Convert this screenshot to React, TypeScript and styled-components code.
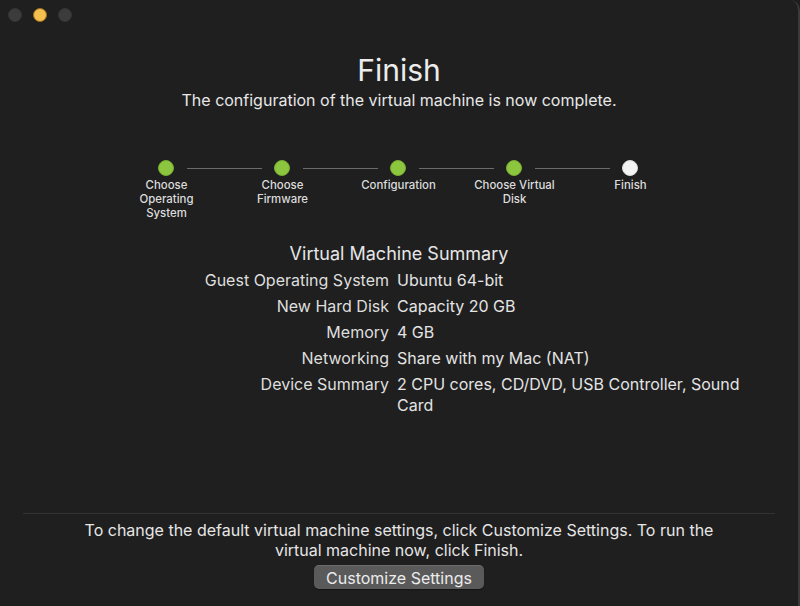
import styled, { createGlobalStyle } from 'styled-components'

const GlobalStyle = createGlobalStyle`
  html, body {
    margin: 0;
    padding: 0;
    background: #1e1e1e;
  }

  body {
    font-family: Inter, "Liberation Sans", sans-serif;
    color: #e4e4e4;
    -webkit-font-smoothing: antialiased;
  }
`

const steps = [
  { label: 'Choose Operating System', done: true },
  { label: 'Choose Firmware', done: true },
  { label: 'Configuration', done: true },
  { label: 'Choose Virtual Disk', done: true },
  { label: 'Finish', done: false },
]

const summary = [
  { name: 'Guest Operating System', value: 'Ubuntu 64-bit' },
  { name: 'New Hard Disk', value: 'Capacity 20 GB' },
  { name: 'Memory', value: '4 GB' },
  { name: 'Networking', value: 'Share with my Mac (NAT)' },
  { name: 'Device Summary', value: '2 CPU cores, CD/DVD, USB Controller, Sound Card' },
]

const App = () => {
  return (
    <>
      <GlobalStyle />
      <Window>
        <TitleBar>
          <Light />
          <Light $color='#f5bf4f' $ring='#9a6f1c' />
          <Light />
        </TitleBar>

        <Header>
          <Title>Finish</Title>
          <Subtitle>The configuration of the virtual machine is now complete.</Subtitle>
        </Header>

        <Stepper>
          {steps.map((step, i) => (
            <Step key={step.label}>
              <Track>
                <Connector $side='left' $hidden={i === 0} />
                <Dot $done={step.done} />
                <Connector $side='right' $hidden={i === steps.length - 1} />
              </Track>
              <StepLabel>{step.label}</StepLabel>
            </Step>
          ))}
        </Stepper>

        <SummaryTitle>Virtual Machine Summary</SummaryTitle>
        <SummaryGrid>
          {summary.map(row => (
            <Row key={row.name}>
              <RowName>{row.name}</RowName>
              <RowValue>{row.value}</RowValue>
            </Row>
          ))}
        </SummaryGrid>

        <Footer>
          <Hint>
            To change the default virtual machine settings, click Customize Settings. To run the
            virtual machine now, click Finish.
          </Hint>
          <Button type='button'>Customize Settings</Button>
        </Footer>
      </Window>
    </>
  )
}

const Window = styled.div`
  display: flex;
  flex-direction: column;
  width: 800px;
  height: 606px;
  box-sizing: border-box;
  background: #1f1f1f;
  border-right: 2px solid #3a3a3a;
  border-top-right-radius: 10px;
  overflow: hidden;
`

const TitleBar = styled.div`
  display: flex;
  align-items: center;
  gap: 11px;
  height: 30px;
  padding-left: 8px;
`

const Light = styled.span<{ $color?: string; $ring?: string }>`
  width: 14px;
  height: 14px;
  box-sizing: border-box;
  border-radius: 50%;
  background: ${p => p.$color || '#3c3c3c'};
  border: 1px solid ${p => p.$ring || '#353535'};
`

const Header = styled.div`
  display: flex;
  flex-direction: column;
  align-items: center;
  margin-top: 22px;
`

const Title = styled.h1`
  margin: 0;
  font-size: 30px;
  line-height: 36px;
  font-weight: 400;
  color: #ececec;
`

const Subtitle = styled.p`
  margin: 2px 0 0;
  font-size: 16px;
  line-height: 20px;
  color: #e8e8e8;
`

const Stepper = styled.div`
  display: grid;
  grid-template-columns: repeat(5, 116px);
  justify-content: center;
  margin: 50px 0 0 -1px;
`

const Step = styled.div`
  display: flex;
  flex-direction: column;
  align-items: center;
`

const Track = styled.div`
  display: flex;
  align-items: center;
  width: 100%;
`

const Connector = styled.span<{ $side: 'left' | 'right'; $hidden: boolean }>`
  flex: 1;
  height: 1px;
  background: ${p => (p.$hidden ? 'transparent' : '#6b6b6b')};
  margin-left: ${p => (p.$side === 'right' ? '13px' : '0')};
  margin-right: ${p => (p.$side === 'left' ? '12px' : '0')};
`

const Dot = styled.span<{ $done: boolean }>`
  width: 16px;
  height: 16px;
  box-sizing: border-box;
  border-radius: 50%;
  background: ${p => (p.$done ? '#8cc63f' : '#f4f4f4')};
  border: 1px solid ${p => (p.$done ? '#79ad33' : '#dcdcdc')};
`

const StepLabel = styled.span`
  margin-top: 2px;
  max-width: 94px;
  font-size: 11.4px;
  line-height: 14px;
  font-weight: 500;
  text-align: center;
  color: #dcdcdc;
`

const SummaryTitle = styled.h2`
  margin: 23px 0 0;
  font-size: 18px;
  line-height: 22px;
  font-weight: 400;
  text-align: center;
  color: #e6e6e6;
`

const SummaryGrid = styled.div`
  display: flex;
  flex-direction: column;
  gap: 5px;
  margin-top: 5px;
`

const Row = styled.div`
  display: grid;
  grid-template-columns: 389px 348px;
  column-gap: 8px;
  font-size: 16px;
  line-height: 21px;
`

const RowName = styled.span`
  text-align: right;
  color: #dedede;
`

const RowValue = styled.span`
  color: #e4e4e4;
`

const Footer = styled.div`
  display: flex;
  flex-direction: column;
  align-items: center;
  margin: auto 23px 0;
  padding: 6px 0 17px;
  border-top: 1px solid #333333;
`

const Hint = styled.p`
  margin: 0;
  max-width: 650px;
  font-size: 16px;
  line-height: 20px;
  text-align: center;
  color: #e6e6e6;
`

const Button = styled.button`
  margin-top: 5px;
  height: 24px;
  padding: 0 12px;
  border: none;
  border-top: 1px solid #6c6c6c;
  border-radius: 5px;
  background: #5a5a5a;
  font-family: inherit;
  font-size: 16px;
  color: #ececec;
  box-shadow: 0 1px 1px rgba(0, 0, 0, 0.35);
`

export default App
